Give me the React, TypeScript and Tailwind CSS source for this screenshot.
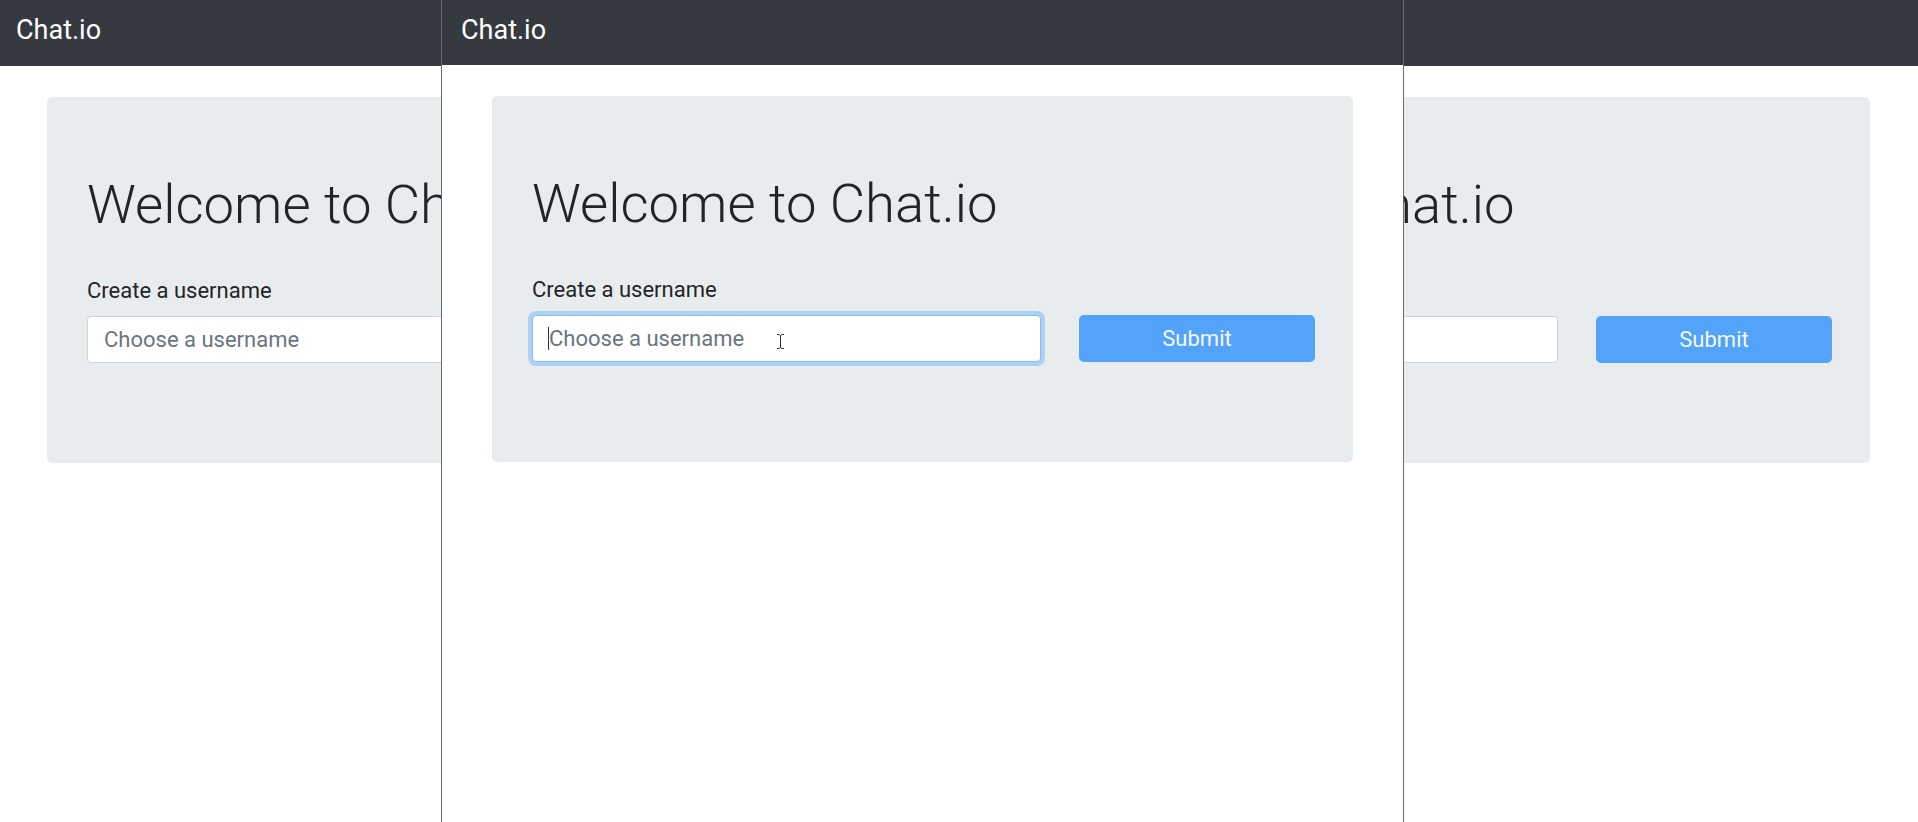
import React from "react";

const IBeam = () => (
  <svg width="9" height="17" viewBox="0 0 9 17" fill="none">
    <path d="M1 1.5c1.5 0 3 0 3.5 1M8 1.5c-1.5 0-3 0-3.5 1M4.5 2.5v12M1 15.5c1.5 0 3 0 3.5-1M8 15.5c-1.5 0-3 0-3.5-1" stroke="#2b2b2b" strokeWidth="1" />
  </svg>
);

const ChatPage = ({ active = false }: { active?: boolean }) => {
  return (
    <div className="h-full w-full bg-white">
      <nav className={`${active ? "h-[65px]" : "h-[66px]"} bg-[#343a40] flex items-center pl-[19px] pb-[5px]`}>
        <span className="text-[27px] text-white leading-none">Chat.io</span>
      </nav>
      <div className="mt-[31px] mx-[50px] rounded-[5px] bg-[#e9ecef] pt-[75px] pb-[100px] pl-[40px] pr-[38px]">
        <h1 className="text-[54.5px] leading-[65px] font-light text-[#212529]">Welcome to Chat.io</h1>
        <label className="block mt-[38px] text-[22px] leading-[32px] text-[#212529]">Create a username</label>
        <div className="mt-[9px] flex items-center">
          <div className="relative w-[509px] h-[47px]">
            <input
              placeholder="Choose a username"
              readOnly
              className={`w-full h-full rounded-[4px] bg-white pl-[16px] text-[22px] outline-none placeholder:text-[#6c757d] border ${
                active ? "border-[#80bdff] shadow-[0_0_0_4px_rgba(0,123,255,0.25)]" : "border-[#ced4da]"
              }`}
            />
            {active && (
              <>
                <span className="absolute left-[16px] top-[12px] w-px h-[23px] bg-[#333]" />
                <span className="absolute left-[244px] top-[18px]">
                  <IBeam />
                </span>
              </>
            )}
          </div>
          <button className="ml-auto w-[236px] h-[47px] rounded-[5px] bg-[#52a3f9] text-[22px] text-[#f4f9ff]">
            Submit
          </button>
        </div>
      </div>
    </div>
  );
};

export default function App() {
  return (
    <div className="relative w-[1918px] h-[822px] overflow-hidden bg-white font-[family-name:Roboto,'Liberation_Sans',sans-serif]">
      <div className="absolute top-0 left-[-4px] w-[963px] h-full border-x border-transparent">
        <ChatPage />
      </div>
      <div className="absolute top-0 left-[958px] w-[963px] h-full border-x border-transparent">
        <ChatPage />
      </div>
      <div className="absolute top-0 left-[441px] w-[963px] h-full border-x border-[#6b6b6b]">
        <ChatPage active />
      </div>
    </div>
  );
}
